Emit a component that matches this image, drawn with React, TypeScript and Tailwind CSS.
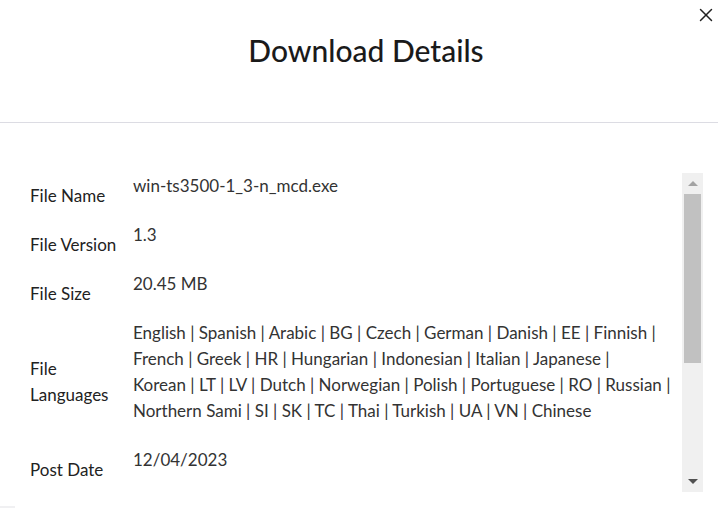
import { X } from 'lucide-react';

const rows: { label: string[]; value: string[] }[] = [
  { label: ['File Name'], value: ['win-ts3500-1_3-n_mcd.exe'] },
  { label: ['File Version'], value: ['1.3'] },
  { label: ['File Size'], value: ['20.45 MB'] },
  {
    label: ['File', 'Languages'],
    value: [
      'English | Spanish | Arabic | BG | Czech | German | Danish | EE | Finnish |',
      'French | Greek | HR | Hungarian | Indonesian | Italian | Japanese |',
      'Korean | LT | LV | Dutch | Norwegian | Polish | Portuguese | RO | Russian |',
      'Northern Sami | SI | SK | TC | Thai | Turkish | UA | VN | Chinese',
    ],
  },
  { label: ['Post Date'], value: ['12/04/2023'] },
];

export default function App() {
  return (
    <div className="w-[718px] h-[508px] bg-white overflow-hidden flex flex-col" style={{ fontFamily: 'Lato, "Open Sans", sans-serif' }}>
      {/* header */}
      <div className="relative h-[123px] shrink-0 border-b border-[#dcdce3] flex justify-center pl-[14px]">
        <h1 className="mt-[31px] text-[30px] leading-[38px] text-[#1a1a1a] font-medium">Download Details</h1>
        <button className="absolute right-0 top-[3px] w-6 h-6 flex items-center justify-center text-[#222]">
          <X size={22} strokeWidth={1.6} />
        </button>
      </div>

      {/* body */}
      <div className="flex pt-[50px] pr-[15px] flex-1 min-h-0">
        <div className="flex-1 h-[319px] overflow-hidden">
          <div className="grid grid-cols-[133px_1fr] gap-y-[23px] text-[17px] leading-[26px]">
            {rows.map((r) => (
              <div key={r.label.join()} className="contents">
                <div className="pl-[30px] self-center translate-y-[10px] text-[#222]">
                  {r.label.map((l) => (
                    <div key={l}>{l}</div>
                  ))}
                </div>
                <div className="text-[#333]">
                  {r.value.map((v) => (
                    <div key={v} className="whitespace-nowrap">{v}</div>
                  ))}
                </div>
              </div>
            ))}
          </div>
        </div>

        {/* scrollbar */}
        <div className="w-[21px] h-[319px] bg-[#f0f0f0] flex flex-col items-center">
          <div className="h-[21px] w-full flex items-center justify-center">
            <div className="w-0 h-0 border-l-[5px] border-r-[5px] border-b-[5px] border-l-transparent border-r-transparent border-b-[#a3a3a3]" />
          </div>
          <div className="w-[17px] h-[169px] bg-[#c1c1c1]" />
          <div className="flex-1" />
          <div className="h-[21px] w-full flex items-center justify-center">
            <div className="w-0 h-0 border-l-[5px] border-r-[5px] border-t-[5px] border-l-transparent border-r-transparent border-t-[#505050]" />
          </div>
        </div>
      </div>
      <div className="h-[2px] w-[15px] bg-[#f0f0f2] -mt-[17px]" />
    </div>
  );
}
